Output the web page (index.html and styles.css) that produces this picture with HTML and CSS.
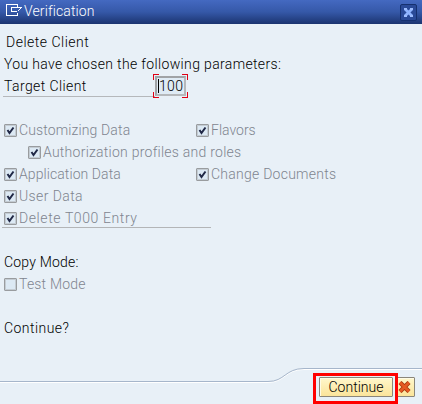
FILE: index.html
```html
<!DOCTYPE html>
<html lang="en">
<head>
<meta charset="utf-8">
<title>Verification</title>
<link rel="stylesheet" href="styles.css">
</head>
<body>
<div class="dialog">
  <header class="titlebar">
    <svg class="title-icon" width="17" height="13" viewBox="0 0 17 13" fill="none" stroke="#fff" shape-rendering="crispEdges"><path d="M11.500 3V.5H.5v10.500H11.500V8.500M5 3.500h10.500M5.500 3.500v4H11"/><path d="M15.500 3.500L11.500 7.500"/></svg>
    <h1>Verification</h1>
    <button class="close" aria-label="Close"><svg width="17" height="17" viewBox="0 0 17 17"><path d="M5 5l7 7M12 5l-7 7" stroke="#8fb4ff" stroke-width="2.800"/><path d="M4 5h3M10 5h3M4 12h3M10 12h3" stroke="#9cbcff" stroke-width="2"/></svg></button>
  </header>
  <main class="content">
    <p class="row head"><span class="t-delete">Delete Client</span></p>
    <p class="row"><span class="t-params">You have chosen the following parameters:</span></p>
    <div class="row target"><label class="t-target">Target Client</label><span class="field"><span class="value">100</span><i class="corner tl"></i><i class="corner tr"></i><i class="corner bl"></i><i class="corner br"></i></span></div>
    <div class="row"></div>
    <div class="row options"><span class="check on"></span><span class="t-custom">Customizing Data</span><span class="second"><span class="check on"></span><span>Flavors</span></span></div>
    <div class="row options nested"><span class="check on"></span><span class="t-auth">Authorization profiles and roles</span></div>
    <div class="row options"><span class="check on"></span><span class="t-app">Application Data</span><span class="second"><span class="check on"></span><span class="t-change">Change Documents</span></span></div>
    <div class="row options"><span class="check on"></span><span class="t-user">User Data</span></div>
    <div class="row options last"><span class="check on"></span><span class="t-entry">Delete T000 Entry</span></div>
    <div class="row"></div>
    <p class="row"><span class="t-mode">Copy Mode:</span></p>
    <div class="row options"><span class="check"></span><span class="t-mode">Test Mode</span></div>
    <div class="row"></div>
    <p class="row"><span class="t-continue">Continue?</span></p>
  </main>
  <footer class="footer">
    <svg class="edge" width="422" height="18" viewBox="0 0 422 18" fill="none"><path d="M0 15.500H268C285 15.500 285 2.500 304 2.500H422" stroke="#fff"/><path d="M0 14.500H268C285 14.500 285 1.500 304 1.500H422" stroke="#a6b6cb"/></svg>
    <div class="actions">
      <div class="highlight"><button class="btn">Continue</button></div>
      <button class="btn cancel" aria-label="Cancel"><svg width="13" height="12" viewBox="0 0 13 12"><path d="M2 1.500l9 9M11 1.500l-9 9" stroke="#a8380f" stroke-width="4.400"/><path d="M2 1.500l9 9M11 1.500l-9 9" stroke="#e55a22" stroke-width="2.600"/></svg></button>
    </div>
  </footer>
</div>
</body>
</html>
```

FILE: styles.css
```css
* { box-sizing: border-box; }
body { margin: 0; background: #e8f0f7; }
h1, p { margin: 0; font-weight: 300; }
button { padding: 0; margin: 0; font: inherit; color: inherit; }
svg { display: block; }
.dialog {
  width: 422px; height: 404px; overflow: hidden;
  display: flex; flex-direction: column;
  background: #e8f0f7; color: #000;
  font: 300 14px/22px Roboto, "Liberation Sans", sans-serif;
}
.titlebar {
  height: 24px; flex: none; display: flex; align-items: center;
  padding: 0 5px 0 6px; color: #fff;
  background: linear-gradient(#4469c1, #3558a8 50%, #1b3470);
}
.title-icon { margin: -3px 1px 0 0; }
h1 { font-size: 14px; line-height: 22px; letter-spacing: .12px; flex: 1; margin-top: -2px; }
.close {
  width: 17px; height: 17px; border: 1px solid #15306f; border-radius: 2px;
  background: #2a4a98; display: flex; align-items: center; justify-content: center;
}
.close svg { flex: none; }
.content { flex: 1; padding: 7px 0 0 4px; }
.row { height: 22px; display: flex; align-items: center; white-space: nowrap; }
.head { padding-left: 2px; }
.t-delete { letter-spacing: .5px; }
.t-params { letter-spacing: .35px; }
.t-target { letter-spacing: .4px; }
.t-custom { letter-spacing: .13px; }
.t-auth { letter-spacing: .25px; }
.t-app { letter-spacing: .08px; }
.t-change { letter-spacing: .25px; }
.t-user { letter-spacing: .4px; }
.t-entry { letter-spacing: .6px; }
.t-mode { letter-spacing: .2px; }
.t-continue { letter-spacing: .45px; }
.target label {
  width: 152px; height: 21px; line-height: 20px; margin-left: -1px;
  padding-left: 1px; border-bottom: 1px solid #b5b8bb;
}
.field {
  position: relative; width: 31px; height: 20px;
  border: 2px solid #a0a3a6; border-right-color: #b5b8bb; border-bottom-color: #b5b8bb;
  background: #dfebf5; letter-spacing: .3px;
}
.value { display: block; border-left: 1px solid #000; margin: 1px 0 0 1px; height: 14px; line-height: 15px; }
.corner { position: absolute; width: 6px; height: 6px; border: 0 solid #e00014; }
.tl { left: -4px; top: -4px; border-width: 1px 0 0 1px; }
.tr { right: -4px; top: -4px; border-width: 1px 1px 0 0; }
.bl { left: -4px; bottom: -4px; border-width: 0 0 1px 1px; }
.br { right: -4px; bottom: -4px; border-width: 0 1px 1px 0; }
.options { color: #7f858f; position: relative; }
.nested { padding-left: 24px; }
.last {
  width: 209px; height: 21px; margin: 0 0 1px -2px; padding: 2px 0 0 2px;
  border-bottom: 1px solid #b3b5b7;
}
.check {
  width: 13px; height: 13px; flex: none; border: 1px solid #999c9f;
  border-radius: 1px; background: #dce9f4; box-shadow: inset 0 0 0 1px #c4ccd3;
  margin-right: 2px;
}
.on {
  background: #dce9f4 url("data:image/svg+xml,%3Csvg xmlns='http://www.w3.org/2000/svg' width='11' height='11'%3E%3Cpath d='M2.500 5L4.500 8L8.500 2.500' fill='none' stroke='%23202846' stroke-width='2'/%3E%3C/svg%3E") no-repeat;
}
.second { display: flex; align-items: center; position: absolute; left: 192px; }
.footer { position: relative; height: 37px; flex: none; }
.edge { position: absolute; left: 0; top: 0; }
.actions { position: relative; display: flex; justify-content: flex-end; align-items: center; padding: 6px 7px 0 0; }
.highlight { border: 3px solid #f00; width: 85px; height: 31px; padding: 1px 2px 0 3px; position: relative; z-index: 1; }
.btn {
  display: block; width: 74px; height: 20px; border: 1px solid #8b867a; border-radius: 1px;
  background: linear-gradient(#fff7cb, #fbe49a); line-height: 18px; text-align: center;
  box-shadow: inset 1px 1px 0 #fffbe5;
}
.cancel { width: 19px; margin: -3px 0 0 -2px; padding-right: 3px; display: flex; align-items: center; justify-content: center; }
.cancel svg { flex: none; }
```
